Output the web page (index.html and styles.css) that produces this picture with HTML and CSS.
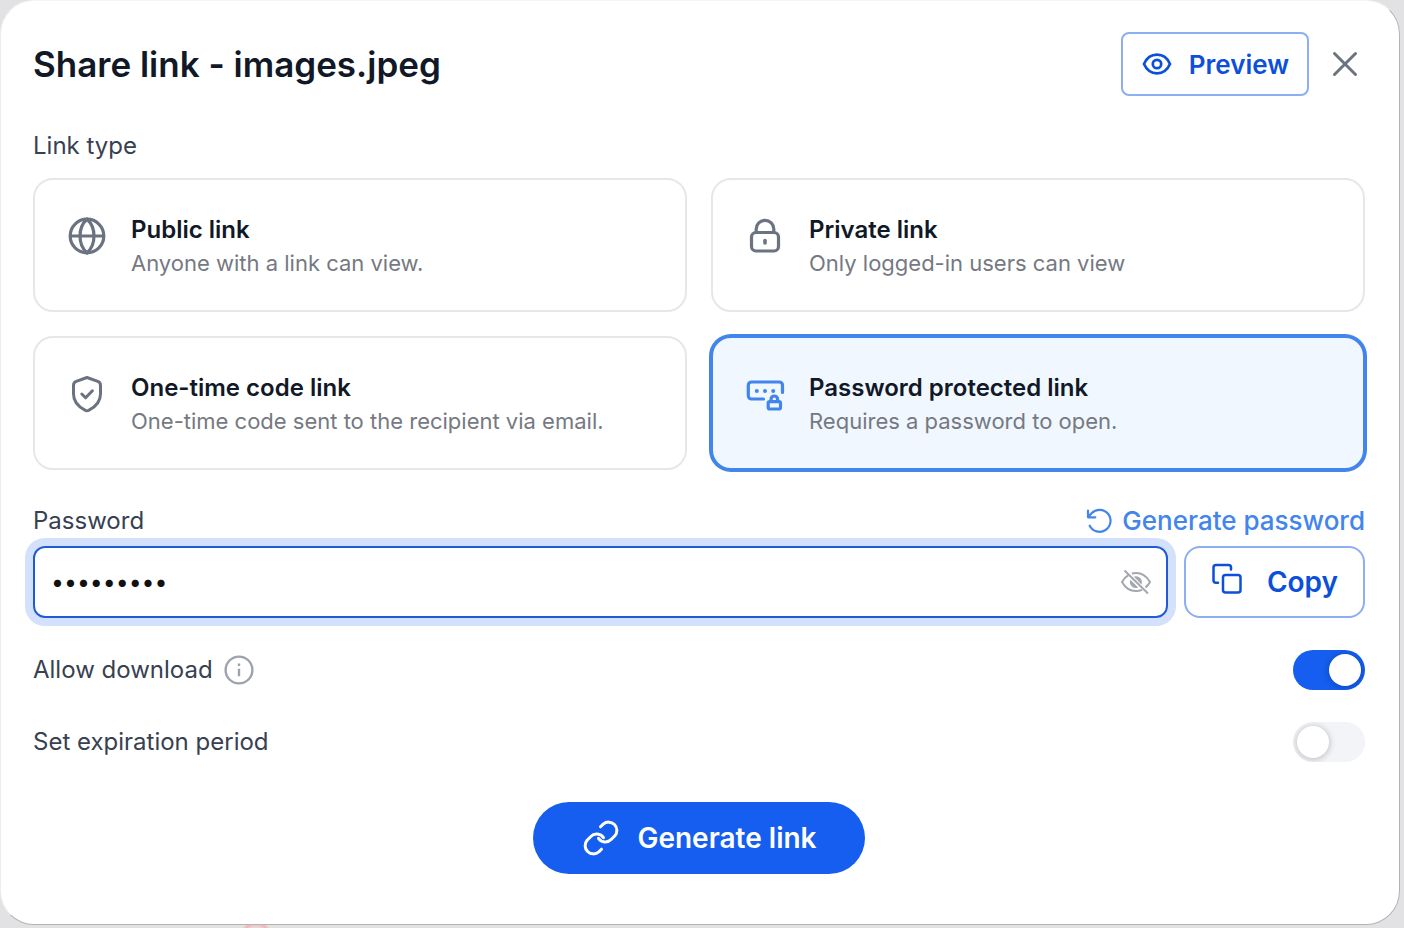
FILE: index.html
```html
<!DOCTYPE html>
<html lang="en">
<head>
<meta charset="utf-8">
<meta name="viewport" content="width=device-width, initial-scale=1">
<title>Share link</title>
<link rel="stylesheet" href="styles.css">
</head>
<body>
<main class="dialog" role="dialog" aria-labelledby="dialog-title">
  <header class="dialog-header">
    <h1 class="title" id="dialog-title">Share link - images.jpeg</h1>
    <button type="button" class="btn btn-preview">
      <svg width="32" height="32" viewBox="0 0 32 32" fill="none" stroke="currentColor" stroke-width="2.7"><path d="M3 16C5.400 10.500 10 6.700 16 6.700s10.600 3.800 13 9.300c-2.400 5.500-7 9.300-13 9.300S5.400 21.500 3 16z"/><circle cx="16" cy="16" r="4.200"/></svg>
      Preview
    </button>
    <button type="button" class="btn-close" aria-label="Close">
      <svg width="32" height="32" viewBox="0 0 32 32" fill="none" stroke="currentColor" stroke-width="3" stroke-linecap="round"><path d="M5.500 5.500l21 21M26.500 5.500l-21 21"/></svg>
    </button>
  </header>

  <fieldset class="types">
    <legend class="label">Link type</legend>
    <div class="grid">
      <label class="card">
        <input class="card-input" type="radio" name="type">
        <svg class="card-icon" width="40" height="40" viewBox="0 0 40 40" fill="none" stroke="currentColor" stroke-width="3.200"><circle cx="20" cy="20" r="16.800"/><path d="M3 20h34M20 3.200c-4.800 4.200-7 10-7 16.800s2.200 12.600 7 16.800c4.800-4.200 7-10 7-16.800S24.800 7.400 20 3.200z"/></svg>
        <span class="card-text"><span class="card-title">Public link</span><span class="card-sub">Anyone with a link can view.</span></span>
      </label>
      <label class="card">
        <input class="card-input" type="radio" name="type">
        <svg class="card-icon" width="40" height="40" viewBox="0 0 40 40" fill="none" stroke="currentColor" stroke-width="3.200" stroke-linecap="round"><rect x="6.500" y="16.500" width="27" height="18.500" rx="4.500"/><path d="M11.200 16.500v-3.400a8.800 8.800 0 0 1 17.600 0v3.400"/><path d="M20 24.600v2.400" stroke-width="3.600"/></svg>
        <span class="card-text"><span class="card-title">Private link</span><span class="card-sub">Only logged-in users can view</span></span>
      </label>
      <label class="card">
        <input class="card-input" type="radio" name="type">
        <svg class="card-icon" width="40" height="40" viewBox="0 0 40 40" fill="none" stroke="currentColor" stroke-width="3" stroke-linecap="round" stroke-linejoin="round"><path d="M20 3.500L30.800 7.400c1.900.7 2.700 2 2.700 4V20c0 7.500-4.500 12.500-11.500 16.200-1.400.8-2.600.8-4 0C11 32.500 6.500 27.500 6.500 20v-8.600c0-2 .8-3.300 2.700-4z"/><path d="M14.800 20l3.800 3.800 6.800-7"/></svg>
        <span class="card-text"><span class="card-title">One-time code link</span><span class="card-sub">One-time code sent to the recipient via email.</span></span>
      </label>
      <label class="card selected">
        <input class="card-input" type="radio" name="type" checked>
        <svg class="card-icon" width="40" height="40" viewBox="0 0 40 40" fill="none" stroke="currentColor" stroke-width="3.200" stroke-linecap="round" stroke-linejoin="round"><path d="M18.500 25H6.500a3.200 3.200 0 0 1-3.200-3.200V11.200A3.200 3.200 0 0 1 6.500 8h27.800a3.200 3.200 0 0 1 3.200 3.200v7.300"/><rect x="23.200" y="27.700" width="12.300" height="7.300" rx="1.500"/><path d="M26 27.500v-2.200a3.300 3.300 0 0 1 6.600 0v2.200"/><path d="M11.800 17h.01M20 17h.01M28.200 17h.01" stroke-width="4"/></svg>
        <span class="card-text"><span class="card-title">Password protected link</span><span class="card-sub">Requires a password to open.</span></span>
      </label>
    </div>
  </fieldset>

  <div class="row row-password">
    <label class="label" for="password">Password</label>
    <button type="button" class="btn-text">
      <svg width="28" height="28" viewBox="0 0 28 28" fill="none" stroke="currentColor" stroke-width="2.200" stroke-linecap="round" stroke-linejoin="round"><path d="M2 3.500v6.800h7.300M2.400 9.800l3.200-3.600a11 11 0 1 1-1.900 12.500"/></svg>
      Generate password
    </button>
  </div>
  <div class="field-row">
    <div class="field">
      <input class="field-input" id="password" type="password" value="secret123">
      <button type="button" class="btn-eye" aria-label="Show password">
        <svg width="32" height="28" viewBox="0 0 32 28" fill="none" stroke="currentColor" stroke-width="2"><path d="M11.800 5.500A15 15 0 0 1 16 4.900c6 0 10.800 3.300 14 9.100a18 18 0 0 1-4.500 5.400M8.300 7.100A18 18 0 0 0 2 14c3.200 5.800 8 9.100 14 9.100 2.200 0 4.200-.4 6-1.200"/><path d="M13.800 8.600a6 6 0 0 1 7.600 7.900zM10.400 11.800a6 6 0 0 0 7.800 7.800z" fill="currentColor" stroke="none"/><path d="M4.500 2.500l23.500 23"/></svg>
      </button>
    </div>
    <button type="button" class="btn btn-copy">
      <svg class="copy-icon" width="32" height="32" viewBox="0 0 32 32" fill="none" stroke="currentColor" stroke-width="2.500" stroke-linecap="round"><rect x="12" y="12" width="17.500" height="17.500" rx="2.500"/><path d="M7 19.800H5a2.500 2.500 0 0 1-2.500-2.500V4.500A2.500 2.500 0 0 1 5 2h12.500A2.500 2.500 0 0 1 20 4.500v2"/></svg>
      Copy
    </button>
  </div>

  <div class="row">
    <div class="label-group">
      <label class="label" for="download">Allow download</label>
      <svg class="info" width="32" height="32" viewBox="0 0 32 32" fill="none" stroke="currentColor" stroke-width="2.400"><circle cx="16" cy="16" r="13.400"/><path d="M16 14.800v7.400M16 9.600v2.400"/></svg>
    </div>
    <input class="switch" id="download" type="checkbox" role="switch" checked>
  </div>
  <div class="row">
    <label class="label" for="expiry">Set expiration period</label>
    <input class="switch" id="expiry" type="checkbox" role="switch">
  </div>

  <button type="button" class="btn-main">
    <svg width="40" height="40" viewBox="0 0 40 40" fill="none" stroke="currentColor" stroke-width="3" stroke-linecap="round" stroke-linejoin="round"><path d="M19.500 8.800l2.700-2.700a8.300 8.300 0 0 1 11.700 11.700l-3.500 3.500a8.300 8.300 0 0 1-12.900-1"/><path d="M20.500 31.200l-2.700 2.700a8.300 8.300 0 0 1-11.700-11.700l3.500-3.500a8.300 8.300 0 0 1 12.900 1"/></svg>
    Generate link
  </button>
</main>
</body>
</html>
```
FILE: styles.css
```css
* { box-sizing: border-box; }

body {
  margin: 0;
  min-height: 100vh;
  padding: 0 4px 3px 0;
  display: flex;
  background: radial-gradient(circle at 256px 936px, #ecd6d8 9px, #f0b4b9 13px, transparent 16px), #e2e2e4;
  font-family: Inter, "Liberation Sans", sans-serif;
  color: #111827;
}

button { font: inherit; cursor: pointer; }
svg { display: block; flex: none; }

.dialog {
  flex: 1;
  display: flex;
  flex-direction: column;
  padding: 31px 34px 48px 32px;
  background: #fff;
  border: 1px solid #b4b4b6;
  border-top-color: #f4f4f4;
  border-left-color: #ededed;
  border-radius: 34px;
}

.dialog-header { display: flex; align-items: center; }

.title {
  flex: 1;
  margin: 0;
  font-size: 35px;
  line-height: 44px;
  font-weight: 600;
}

.btn {
  display: flex;
  align-items: center;
  background: #fff;
  border: 2px solid #8caef2;
  color: #0b4fdb;
  font-weight: 600;
}

.btn-preview {
  height: 64px;
  padding: 0 18px;
  gap: 16px;
  border-radius: 8px;
  font-size: 26px;
}

.btn-close {
  margin: 0 4px 0 20px;
  padding: 0;
  border: 0;
  background: none;
  color: #6b7280;
}

.label {
  padding: 0;
  font-size: 24px;
  line-height: 32px;
  color: #374151;
}

.types { margin: 34px 0 0; padding: 0; border: 0; min-width: 0; }

.grid {
  display: grid;
  grid-template-columns: 1fr 1fr;
  gap: 24px;
  margin-top: 16px;
}

.card {
  position: relative;
  display: flex;
  gap: 24px;
  padding: 32px;
  border: 2px solid #e7e7e9;
  border-radius: 20px;
  color: #6b7280;
  cursor: pointer;
}

.card.selected {
  border-color: #4285ec;
  box-shadow: 0 0 0 2px #4285ec;
  background: #f0f7ff;
  color: #4285ec;
}

.card-input {
  position: absolute;
  inset: 0;
  margin: 0;
  appearance: none;
}

.card-icon { margin-top: 4px; }
.card-text { display: flex; flex-direction: column; }
.card-title { font-size: 24px; line-height: 36px; font-weight: 600; color: #111827; }
.card-sub { font-size: 22px; line-height: 30px; color: #757982; }

.row {
  display: flex;
  justify-content: space-between;
  align-items: center;
  margin-top: 32px;
}

.btn-text {
  display: flex;
  align-items: center;
  gap: 8px;
  padding: 0;
  border: 0;
  background: none;
  color: #4285ec;
  font-size: 26px;
  line-height: 32px;
  font-weight: 500;
}

.row-password { margin-top: 35px; }
.field-row { display: flex; gap: 16px; margin-top: 9px; }

.field {
  flex: 1;
  display: flex;
  align-items: center;
  height: 72px;
  padding: 0 14px 0 16px;
  border: 2px solid #1f5bd8;
  border-radius: 12px;
  box-shadow: 0 0 0 8px #d3e1fc;
}

.field-input {
  flex: 1;
  min-width: 0;
  padding: 0;
  border: 0;
  outline: 0;
  background: none;
  font: 23px Inter, sans-serif;
  color: #111;
}

.btn-eye { padding: 0; border: 0; background: none; color: #a3a7b0; }

.btn-copy {
  gap: 24px;
  height: 72px;
  padding: 0 25px;
  border-radius: 16px;
  font-size: 28px;
}

.copy-icon { margin-bottom: 6px; }

.label-group { display: flex; align-items: center; gap: 10px; }
.info { color: #9ca3af; }

.switch {
  appearance: none;
  display: flex;
  width: 72px;
  height: 40px;
  margin: 0;
  padding: 4px;
  border-radius: 20px;
  background: #f2f4f7;
  overflow: hidden;
}

.switch::before {
  content: "";
  width: 32px;
  height: 32px;
  border-radius: 50%;
  background: #fff;
  box-shadow: 0 1px 6px 1px rgba(0, 0, 0, 0.2);
}

.switch:checked { background: #155eef; justify-content: flex-end; }

.btn-main {
  display: flex;
  align-items: center;
  align-self: center;
  gap: 16px;
  height: 72px;
  margin-top: 40px;
  padding: 0 48px;
  border: 0;
  border-radius: 36px;
  background: #155eef;
  color: #fff;
  font-size: 28px;
  font-weight: 600;
}
```
